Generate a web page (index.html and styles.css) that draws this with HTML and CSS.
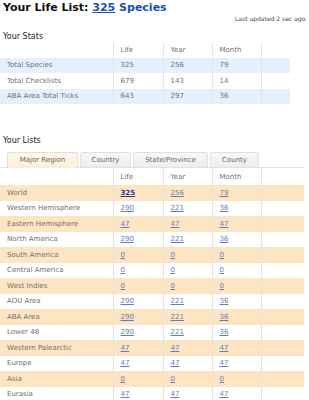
FILE: index.html
```html
<!DOCTYPE html>
<html lang="en">
<head>
  <meta charset="UTF-8" />
  <title>Your Life List</title>
  <link rel="stylesheet" href="styles.css">
</head>
<body>

  <!-- Title -->
  <h1 class="title">Your Life List: <a href="#" class="title-link">325</a> <span class="title-rest">Species</span></h1>
  <div class="updated">Last updated 2 sec ago.</div>

  <!-- Stats -->
  <h2 class="section">Your Stats</h2>
  <table class="grid stats">
    <tr class="head"><td></td><td>Life</td><td>Year</td><td>Month</td><td></td></tr>
    <tr class="alt"><td>Total Species</td><td>325</td><td>256</td><td>79</td><td></td></tr>
    <tr><td>Total Checklists</td><td>679</td><td>143</td><td>14</td><td></td></tr>
    <tr class="alt"><td>ABA Area Total Ticks</td><td>643</td><td>297</td><td>36</td><td></td></tr>
  </table>

  <!-- Lists -->
  <h2 class="section lists-title">Your Lists</h2>
  <div class="tabs">
    <a href="#" class="tab active">Major Region</a>
    <a href="#" class="tab">Country</a>
    <a href="#" class="tab">State/Province</a>
    <a href="#" class="tab">County</a>
  </div>
  <table class="grid lists">
    <tr class="head"><td></td><td>Life</td><td>Year</td><td>Month</td><td></td></tr>
    <tr class="alt"><td>World</td><td><a href="#" class="strong">325</a></td><td><a href="#">256</a></td><td><a href="#">79</a></td><td></td></tr>
    <tr><td>Western Hemisphere</td><td><a href="#">290</a></td><td><a href="#">221</a></td><td><a href="#">36</a></td><td></td></tr>
    <tr class="alt"><td>Eastern Hemisphere</td><td><a href="#">47</a></td><td><a href="#">47</a></td><td><a href="#">47</a></td><td></td></tr>
    <tr><td>North America</td><td><a href="#">290</a></td><td><a href="#">221</a></td><td><a href="#">36</a></td><td></td></tr>
    <tr class="alt"><td>South America</td><td><a href="#">0</a></td><td><a href="#">0</a></td><td><a href="#">0</a></td><td></td></tr>
    <tr><td>Central America</td><td><a href="#">0</a></td><td><a href="#">0</a></td><td><a href="#">0</a></td><td></td></tr>
    <tr class="alt"><td>West Indies</td><td><a href="#">0</a></td><td><a href="#">0</a></td><td><a href="#">0</a></td><td></td></tr>
    <tr><td>AOU Area</td><td><a href="#">290</a></td><td><a href="#">221</a></td><td><a href="#">36</a></td><td></td></tr>
    <tr class="alt"><td>ABA Area</td><td><a href="#">290</a></td><td><a href="#">221</a></td><td><a href="#">36</a></td><td></td></tr>
    <tr><td>Lower 48</td><td><a href="#">290</a></td><td><a href="#">221</a></td><td><a href="#">36</a></td><td></td></tr>
    <tr class="alt"><td>Western Palearctic</td><td><a href="#">47</a></td><td><a href="#">47</a></td><td><a href="#">47</a></td><td></td></tr>
    <tr><td>Europe</td><td><a href="#">47</a></td><td><a href="#">47</a></td><td><a href="#">47</a></td><td></td></tr>
    <tr class="alt"><td>Asia</td><td><a href="#">0</a></td><td><a href="#">0</a></td><td><a href="#">0</a></td><td></td></tr>
    <tr><td>Eurasia</td><td><a href="#">47</a></td><td><a href="#">47</a></td><td><a href="#">47</a></td><td></td></tr>
    <tr class="alt"><td></td><td></td><td></td><td></td><td></td></tr>
  </table>

</body>
</html>
```

FILE: styles.css
```css
body {
  font-family: "DejaVu Sans", Verdana, sans-serif;
  background: #fff;
  color: #555;
  margin: 0;
  padding: 0 2px 0 3px;
  overflow: hidden;
}
.title {
  font-size: 11px;
  font-weight: bold;
  color: #111;
  margin: 2px 0 0;
  line-height: 12px;
}
.title-link, .title-rest {
  color: #1d4fae;
}
.updated {
  font-size: 6px;
  color: #444;
  text-align: right;
  margin: 1px 0 0;
  line-height: 7px;
}
.section {
  font-size: 8px;
  font-weight: normal;
  color: #222;
  margin: 10px 0 0;
  line-height: 10px;
}
.lists-title {
  margin-top: 32px;
  margin-bottom: 6px;
}
.grid {
  border-collapse: collapse;
  font-size: 7px;
  color: #707070;
}
.grid td {
  height: 15.5px;
  padding: 0 0 0 7px;
  vertical-align: middle;
  box-sizing: border-box;
  white-space: nowrap;
}
.lists tr.head td {
  height: 17px;
}
.grid td + td {
  border-left: 1px solid #e4e4e4;
}
.grid td:nth-child(1) { width: 113px; }
.grid td:nth-child(2) { width: 50px; }
.grid td:nth-child(3) { width: 49px; }
.grid td:nth-child(4) { width: 49px; }
.stats {
  width: 290px;
  margin-left: -3px;
}
.stats tr.alt {
  background: #e6effc;
}
.lists {
  width: 304px;
  margin-left: -3px;
}
.lists tr.alt {
  background: #fde5c3;
}
.grid a {
  color: #5f7fb5;
}
.grid a.strong {
  color: #1d3f95;
  font-weight: bold;
}
.tabs {
  display: flex;
  gap: 2px;
  padding-left: 7px;
  border-bottom: 1px solid #e2e2e2;
  width: 297px;
  margin-left: -3px;
}
.tab {
  font-size: 7px;
  color: #666;
  text-decoration: none;
  height: 15px;
  line-height: 15px;
  text-align: center;
  border: 1px solid #e0e0e0;
  border-bottom: none;
  border-radius: 3px 3px 0 0;
  background: linear-gradient(#f8f8f8, #ededed);
  box-sizing: border-box;
  margin-bottom: -1px;
}
.tab:nth-child(1) { width: 71px; }
.tab:nth-child(2) { width: 51px; }
.tab:nth-child(3) { width: 75px; }
.tab:nth-child(4) { width: 49px; }
.tab.active {
  background: linear-gradient(#fef8e8, #fcefd4);
  height: 16px;
}
```
